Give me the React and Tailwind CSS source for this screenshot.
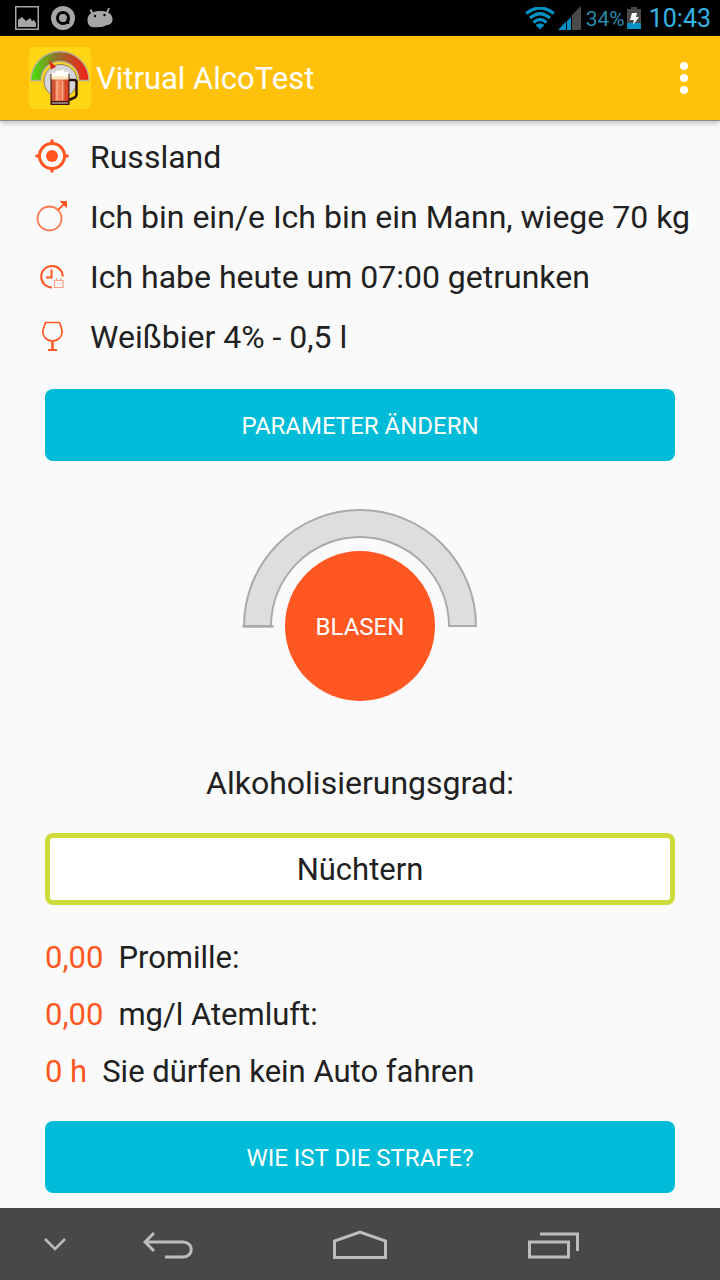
const infoRows = [
  { icon: "target", text: "Russland" },
  { icon: "male", text: "Ich bin ein/e Ich bin ein Mann, wiege 70 kg" },
  { icon: "clock", text: "Ich habe heute um 07:00 getrunken" },
  { icon: "glass", text: "Weißbier 4% - 0,5 l" },
];

const results = [
  { value: "0,00", label: "Promille:" },
  { value: "0,00", label: "mg/l Atemluft:" },
  { value: "0 h", label: "Sie dürfen kein Auto fahren" },
];

function RowIcon({ name }) {
  return (
    <svg
      viewBox="0 0 44 44"
      className="h-11 w-11 shrink-0"
      fill="none"
      stroke="#ff5722"
      strokeWidth="2"
      aria-hidden="true"
    >
      {name === "target" && (
        <g>
          <circle cx="22" cy="21" r="12.5" strokeWidth="3" />
          <circle cx="22" cy="21" r="6" fill="#ff5722" stroke="none" />
          <path d="M22 4.500v5M22 32.500v5M5.500 21h5M33.500 21h5" strokeWidth="3" />
        </g>
      )}
      {name === "male" && (
        <g strokeWidth="1.800">
          <circle cx="19.500" cy="23.500" r="12" opacity="0.800" />
          <path d="M28 15l7-7" />
          <path d="M29.500 6h7.500v7.500z" fill="#ff5722" stroke="none" />
        </g>
      )}
      {name === "clock" && (
        <g>
          <path d="M22 32.500a10.800 10.800 0 1 1 10.800-11" />
          <path d="M21.500 14.500v8h-5.500" />
          <path
            d="M24.500 25.500h8.500v7h-8.500zM26.500 23v2M31 23v2M27 28.500h1M30 28.500h1"
            strokeWidth="1.200"
            opacity="0.550"
          />
        </g>
      )}
      {name === "glass" && (
        <g>
          <path d="M15.500 7.500h14l2.500 7.500c.9 6-3.500 11-9.500 11s-10.400-5-9.500-11z" strokeWidth="1.700" />
          <path d="M22.500 26v8" strokeWidth="2.500" />
          <path d="M18 35h9" />
        </g>
      )}
    </svg>
  );
}

function AppLogo() {
  return (
    <svg viewBox="0 0 62 62" className="h-[62px] w-[62px] shrink-0" aria-hidden="true">
      <defs>
        <linearGradient id="scale" x1="0" x2="1">
          <stop offset="0.050" stopColor="#4fd80c" />
          <stop offset="0.450" stopColor="#92702c" />
          <stop offset="0.950" stopColor="#ee2418" />
        </linearGradient>
        <linearGradient id="beer" x1="0" x2="1">
          <stop offset="0" stopColor="#c4492c" />
          <stop offset="0.400" stopColor="#f98a5c" />
          <stop offset="1" stopColor="#d8391c" />
        </linearGradient>
      </defs>
      <rect width="62" height="62" rx="5" fill="#ffd613" />
      <path
        d="M2 33.500a29 29 0 0 1 58 0h-10a19 19 0 0 0-38 0z"
        fill="url(#scale)"
        stroke="#b9b39a"
        strokeWidth="1.300"
      />
      <circle cx="31.500" cy="34" r="16.500" fill="#d6d6d8" stroke="#73685b" strokeWidth="0.800" />
      <path d="M20 13l7 7-5 2.500z" fill="#d92b1c" />
      <path d="M40 33h5q2.500 0 2.500 2.500v12q0 2.500-3 3.500l-4.500 2" fill="none" stroke="#2b1008" strokeWidth="2.500" />
      <path d="M21.500 27h19v31h-19z" fill="#3a140e" />
      <path d="M22.500 31h17v23h-17z" fill="url(#beer)" />
      <path d="M28 34v19M33.500 34v19" stroke="#fbb08c" strokeWidth="1.500" />
      <path d="M25 34v19M36.500 34v19" stroke="#c0402a" strokeWidth="0.800" />
      <path d="M23 56h16" stroke="#e8ddd6" strokeWidth="1" />
      <path d="M22.500 30v-3q1-2 3-1q2-4 5-2q4-3 5 1q4-1 4 2v3z" fill="#ffffff" />
      <path d="M22.500 29h17v3.500h-17z" fill="#fbe9c4" />
    </svg>
  );
}

function StatusBar() {
  return (
    <div className="flex h-9 items-center justify-between bg-black pl-[15px] pr-[9px] text-[#33b5e5]">
      <div className="flex items-center gap-3">
        <svg viewBox="0 0 24 24" className="h-6 w-6" aria-hidden="true">
          <rect x="0.750" y="0.750" width="22.500" height="22.500" fill="none" stroke="#a6a6a6" strokeWidth="1.500" />
          <path d="M3 21v-7l4-3 4 4 4-3 2 3 2-1 2 3v4z" fill="#a6a6a6" />
        </svg>
        <svg viewBox="0 0 24 24" className="h-6 w-6" aria-hidden="true">
          <circle cx="12" cy="12" r="12" fill="#a6a6a6" />
          <circle cx="12" cy="12" r="5.500" fill="none" stroke="#000" strokeWidth="3" />
          <path d="M17 12v6" stroke="#000" strokeWidth="2.500" />
          <circle cx="12.500" cy="12.500" r="2.500" fill="#a6a6a6" />
        </svg>
        <svg viewBox="0 0 26 22" className="h-[22px] w-[26px]" fill="#a6a6a6" aria-hidden="true">
          <path d="M0.500 13C0.500 7 5 4.500 12 4S25 6 25.500 11.500c.3 4-1.500 6-5 6.500-3 .5-4 2.500-8 2-3 0-6 1-9-.5C1 18 .5 16 .5 13z" />
          <path d="M5.500 7L3.500 2.500M20 6l2-5" stroke="#a6a6a6" strokeWidth="2" />
          <circle cx="8" cy="9" r="1.200" fill="#000" />
          <circle cx="17.500" cy="8" r="1.200" fill="#000" />
        </svg>
      </div>
      <div className="flex items-center">
        <svg viewBox="0 0 30 23" className="mr-[3px] h-[23px] w-[30px]" fill="none" stroke="#0490c3" strokeWidth="3.200" aria-hidden="true">
          <path d="M1 6.500Q15-4.500 29 6.500" />
          <path d="M5 11Q15 2.500 25 11" />
          <path d="M8.500 15.500Q15 9.500 21.500 15.500" />
          <path d="M15 22.500l-4.500-4.500q4.500-3.500 9 0z" fill="#0490c3" stroke="none" />
        </svg>
        <svg viewBox="0 0 23 24" className="mr-[5px] h-6 w-[23px]" aria-hidden="true">
          <path d="M0 24L8 15.500V24zM9 24V15L13 11V24z" fill="#0490c3" />
          <path d="M14 24V9L23 0V24z" fill="#4a4a4a" />
        </svg>
        <span className="mr-0.5 pt-0.5 text-[21px] leading-8 text-[#2a87a8]">34%</span>
        <svg viewBox="0 0 14 22" className="mr-2 h-[22px] w-[14px]" aria-hidden="true">
          <path d="M0 2h4V0h6v2h4v20H0z" fill="#4a4a4a" />
          <path d="M0 16h14v6H0z" fill="#0490c3" />
          <path d="M5 6h5l-1 4h3l-6 8 1-5H3z" fill="#fff" />
        </svg>
        <span className="pt-0.5 text-[25px] leading-8">10:43</span>
      </div>
    </div>
  );
}

function ActionButton({ children }) {
  return (
    <button
      type="button"
      className="block h-[72px] w-full rounded-lg bg-[#00bcd8] pt-0.5 text-2xl text-white"
    >
      {children}
    </button>
  );
}

function NavBar() {
  return (
    <nav className="mt-auto grid h-[72px] grid-cols-[110px_116px_1fr_118px_108px] items-center bg-[#48484a] pt-0.5 text-[#bdbdbd]">
      <button type="button" aria-label="Leiste ausblenden" className="flex justify-center">
        <svg viewBox="0 0 24 24" className="h-6 w-6" fill="none" stroke="currentColor" strokeWidth="2.500">
          <path d="M2 6l10 10L22 6" />
        </svg>
      </button>
      <button type="button" aria-label="Zurück" className="flex justify-center">
        <svg viewBox="0 0 50 28" className="h-7 w-[50px]" fill="none" stroke="currentColor" strokeWidth="3">
          <path d="M11 2L2 11l9 9M2 11h38c11 0 11 15 0 15H22" />
        </svg>
      </button>
      <button type="button" aria-label="Startseite" className="flex justify-center">
        <svg viewBox="0 0 54 30" className="h-[30px] w-[54px]" fill="none" stroke="currentColor" strokeWidth="3">
          <path d="M1.500 27.500V11L27 2l25.500 9V27.500z" />
        </svg>
      </button>
      <button type="button" aria-label="Zuletzt verwendet" className="flex justify-center">
        <svg viewBox="0 0 52 28" className="h-7 w-[52px]" fill="none" stroke="currentColor" strokeWidth="3">
          <path d="M2.500 11h39v15h-39zM13 3h37.500v17" />
        </svg>
      </button>
    </nav>
  );
}

export default function App() {
  return (
    <div className="flex min-h-screen flex-col bg-[#fafafa] font-['Roboto',sans-serif] text-[#212121]">
      <StatusBar />
      <header className="flex h-[85px] items-center border-b border-[#8a8a80] bg-[#ffc10a] pl-[29px] pr-[26px] shadow-[0_2px_6px_rgba(0,0,0,0.25)]">
        <AppLogo />
        <h1 className="ml-[5px] flex-1 pt-0.5 text-[31px] leading-10 text-white">Vitrual AlcoTest</h1>
        <button type="button" aria-label="Menü" className="px-1.5 text-white">
          <svg viewBox="0 0 8 32" className="h-8 w-2" fill="currentColor">
            <circle cx="4" cy="4" r="4" />
            <circle cx="4" cy="16" r="4" />
            <circle cx="4" cy="28" r="4" />
          </svg>
        </button>
      </header>

      <main className="pb-[15px] pt-1.5 text-[31px] leading-10">
        <ul className="pl-[30px] text-[32px]">
          {infoRows.map((row) => (
            <li key={row.icon} className="flex h-[60px] items-center gap-4">
              <RowIcon name={row.icon} />
              <span className="whitespace-nowrap">{row.text}</span>
            </li>
          ))}
        </ul>

        <div className="px-[45px]">
          <div className="mt-[22px]">
            <ActionButton>PARAMETER ÄNDERN</ActionButton>
          </div>

          <div className="mt-[47px] grid h-[193px] justify-items-center">
            <svg viewBox="0 0 240 122" className="col-start-1 row-start-1 h-[122px] w-60" aria-hidden="true">
              <path
                d="M4 118a116 116 0 0 1 232 0h-27a89 89 0 0 0-178 0z"
                fill="#dedede"
                stroke="#aaaaaa"
                strokeWidth="2"
              />
              <path d="M2.500 118.500h31" stroke="#aaaaaa" strokeWidth="2.500" />
            </svg>
            <button
              type="button"
              className="col-start-1 row-start-1 h-[150px] w-[150px] self-end rounded-full bg-[#ff5722] pt-0.5 text-2xl text-white"
            >
              BLASEN
            </button>
          </div>

          <h2 className="mt-[62px] text-center text-[32px] leading-10">Alkoholisierungsgrad:</h2>
          <div className="mt-[30px] flex h-[72px] items-center justify-center rounded-lg border-[5px] border-[#cddc39] bg-white pt-0.5">
            Nüchtern
          </div>

          <dl className="mt-6">
            {results.map((row) => (
              <div key={row.label} className="flex h-[57px] items-center gap-[15px]">
                <dt className="order-2">{row.label}</dt>
                <dd className="text-[#ff5722]">{row.value}</dd>
              </div>
            ))}
          </dl>

          <div className="mt-[21px]">
            <ActionButton>WIE IST DIE STRAFE?</ActionButton>
          </div>
        </div>
      </main>

      <NavBar />
    </div>
  );
}
